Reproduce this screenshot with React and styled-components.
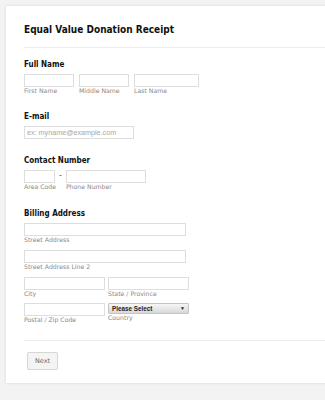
import React from 'react';
import styled, { createGlobalStyle } from 'styled-components';

const GlobalStyle = createGlobalStyle`
  html, body {
    margin: 0;
    padding: 0;
    background: #f3f3f3;
    overflow: hidden;
    font-family: "DejaVu Sans", Verdana, sans-serif;
  }
`;

const Page = styled.div`
  padding: 6px 0 0 6px;
  width: 325px;
  height: 400px;
  box-sizing: border-box;
  overflow: hidden;
`;

const Card = styled.form`
  width: 340px;
  background: #fff;
  box-shadow: 0 0 3px rgba(0, 0, 0, 0.12);
  padding: 17px 0 13px 18px;
  box-sizing: border-box;
`;

const Title = styled.h1`
  margin: 0;
  font-family: "DejaVu Sans Condensed", "DejaVu Sans", sans-serif;
  font-size: 10px;
  font-weight: bold;
  color: #111;
  line-height: 14px;
  padding-bottom: 10px;
  border-bottom: 1px solid #ececec;
`;

const Section = styled.div`
  margin-top: ${(p) => p.$top || 17}px;
`;

const Label = styled.div`
  font-family: "DejaVu Sans Condensed", "DejaVu Sans", sans-serif;
  font-size: 8px;
  font-weight: bold;
  color: #111;
  line-height: 10px;
  margin-bottom: 4px;
`;

const Row = styled.div`
  display: flex;
  align-items: flex-start;
  gap: ${(p) => p.$gap || 5}px;
  margin-bottom: ${(p) => p.$mb || 0}px;
`;

const Field = styled.div`
  display: flex;
  flex-direction: column;
  width: ${(p) => p.$w}px;
`;

const Input = styled.div`
  height: 11px;
  border: 1px solid #dedede;
  background: #fff;
  font-family: "Liberation Sans", Arial, sans-serif;
  font-size: 7.2px;
  color: #a8a8a8;
  line-height: 11px;
  padding: 0 2px;
  white-space: nowrap;
  overflow: hidden;
`;

const Sub = styled.span`
  font-size: 6.2px;
  color: #888;
  line-height: 8px;
  white-space: nowrap;
`;

const Dash = styled.span`
  font-size: 8px;
  color: #555;
  line-height: 12px;
  margin: 0 1px;
`;

const Select = styled.div`
  height: 9px;
  border: 1px solid #c4c4c4;
  border-radius: 1px;
  background: linear-gradient(#f6f6f6, #d8d8d8);
  font-family: "Liberation Sans", Arial, sans-serif;
  font-size: 6.3px;
  font-weight: 600;
  color: #222;
  line-height: 9px;
  padding: 0 3px;
  display: flex;
  justify-content: space-between;
  align-items: center;
`;

const Arrow = styled.span`
  font-size: 5px;
`;

const Footer = styled.div`
  margin-top: 16px;
  border-top: 1px solid #ececec;
  padding: 11px 0 0 3px;
`;

const NextButton = styled.div`
  width: 29px;
  height: 16px;
  border: 1px solid #d6d6d6;
  border-radius: 2px;
  background: #f4f4f4;
  font-size: 6.5px;
  color: #666;
  display: flex;
  align-items: center;
  justify-content: center;
`;

export default function App() {
  return (
    <Page>
      <GlobalStyle />
      <Card>
        <Title>Equal Value Donation Receipt</Title>

        <Section $top={12}>
          <Label>Full Name</Label>
          <Row>
            <Field $w={50}><Input /><Sub>First Name</Sub></Field>
            <Field $w={50}><Input /><Sub>Middle Name</Sub></Field>
            <Field $w={65}><Input /><Sub>Last Name</Sub></Field>
          </Row>
        </Section>

        <Section>
          <Label>E-mail</Label>
          <Field $w={110}><Input>ex: myname@example.com</Input></Field>
        </Section>

        <Section>
          <Label>Contact Number</Label>
          <Row $gap={3}>
            <Field $w={31}><Input /><Sub>Area Code</Sub></Field>
            <Dash>-</Dash>
            <Field $w={80}><Input /><Sub>Phone Number</Sub></Field>
          </Row>
        </Section>

        <Section $top={18}>
          <Label>Billing Address</Label>
          <Row $mb={6}>
            <Field $w={162}><Input /><Sub>Street Address</Sub></Field>
          </Row>
          <Row $mb={6}>
            <Field $w={162}><Input /><Sub>Street Address Line 2</Sub></Field>
          </Row>
          <Row $gap={3} $mb={5}>
            <Field $w={81}><Input /><Sub>City</Sub></Field>
            <Field $w={81}><Input /><Sub>State / Province</Sub></Field>
          </Row>
          <Row $gap={3}>
            <Field $w={81}><Input /><Sub>Postal / Zip Code</Sub></Field>
            <Field $w={81}>
              <Select>Please Select<Arrow>▼</Arrow></Select>
              <Sub>Country</Sub>
            </Field>
          </Row>
        </Section>

        <Footer>
          <NextButton>Next</NextButton>
        </Footer>
      </Card>
    </Page>
  );
}
